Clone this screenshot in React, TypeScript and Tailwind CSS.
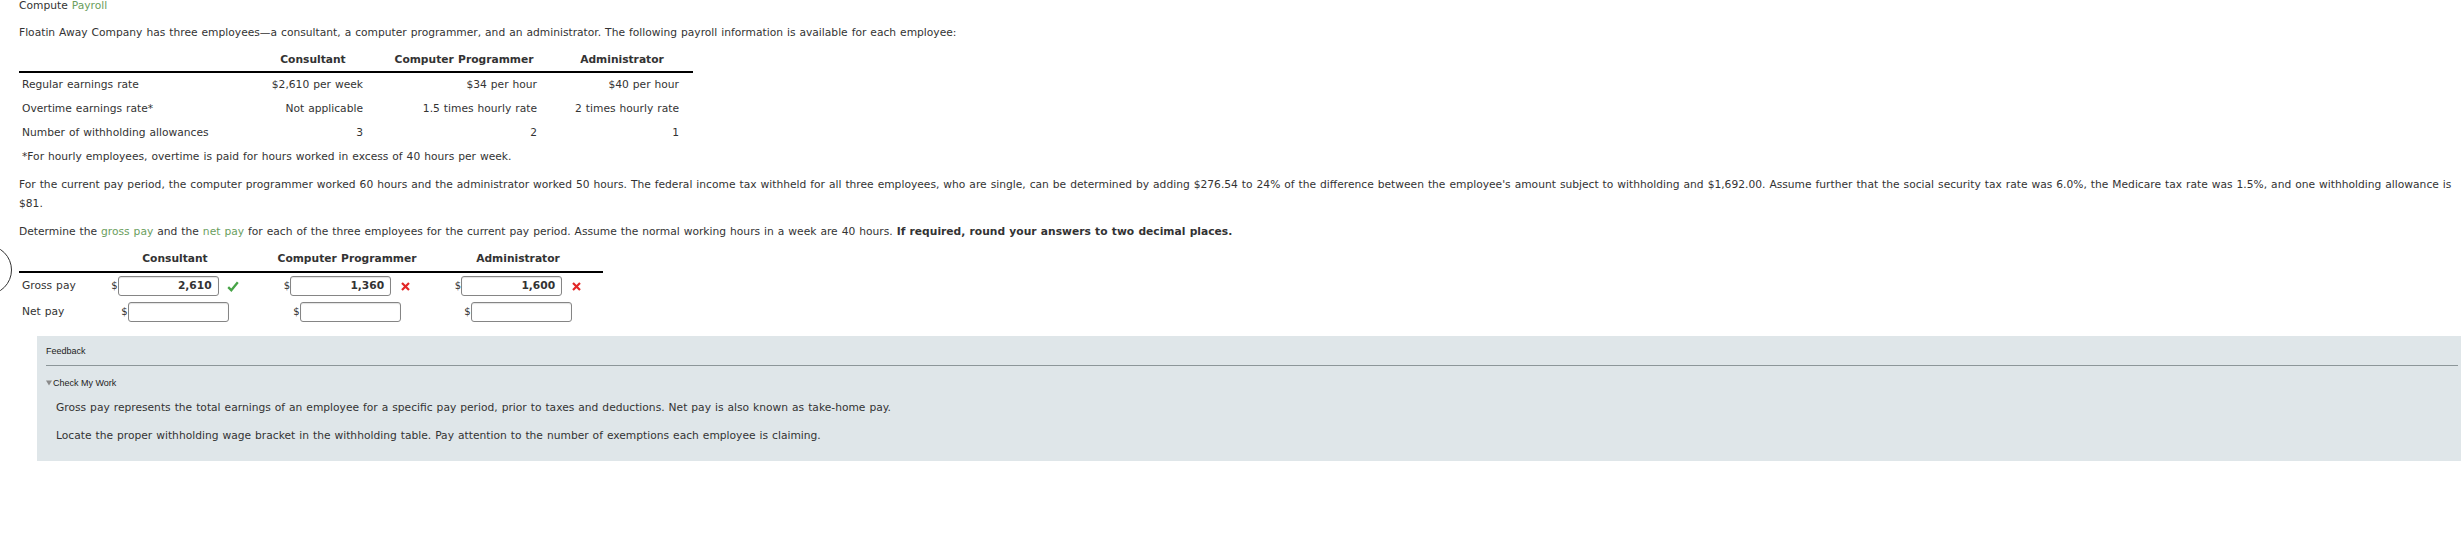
import React from "react";

const font = "font-['DejaVu_Sans',Verdana,sans-serif]";

const Check = () => (
  <svg width="12" height="11" viewBox="0 0 12 11" className="shrink-0">
    <path d="M1.2 6.2 L4.3 9.2 L10.8 1.2" fill="none" stroke="#47a447" strokeWidth="2.3" />
  </svg>
);

const Cross = () => (
  <svg width="9" height="9" viewBox="0 0 9 9" className="shrink-0">
    <path d="M1 1 L8 8 M8 1 L1 8" fill="none" stroke="#e32626" strokeWidth="2.2" />
  </svg>
);

interface AnswerProps {
  value?: string;
  mark?: "ok" | "bad";
}

const Answer = ({ value, mark }: AnswerProps) => (
  <div className="flex items-center justify-center h-full">
    <span className="text-[10px] leading-none">$</span>
    <div className="w-[101px] h-[20px] border border-[#858585] rounded-[3px] bg-white shadow-[inset_0_1px_1px_rgba(0,0,0,0.12)] flex items-center justify-end pr-[6px] font-bold text-[10.7px]">
      {value}
    </div>
    {mark === "ok" && (
      <span className="ml-[8px]">
        <Check />
      </span>
    )}
    {mark === "bad" && (
      <span className="ml-[10px]">
        <Cross />
      </span>
    )}
  </div>
);

const rates = [
  ["Regular earnings rate", "$2,610 per week", "$34 per hour", "$40 per hour"],
  ["Overtime earnings rate*", "Not applicable", "1.5 times hourly rate", "2 times hourly rate"],
  ["Number of withholding allowances", "3", "2", "1"],
];

export default function App() {
  return (
    <div className={`relative w-[2461px] h-[548px] overflow-hidden bg-white text-[#333] text-[10.7px] [word-spacing:0.58px] ${font}`}>
      <div className="absolute left-[-38px] top-[245px] w-[50px] h-[50px] rounded-full border-[1.5px] border-[#333]" />

      <div className="pl-[19px]">
        <div className="h-[11px] leading-[11px]">
          Compute <span className="text-[#6a9e5e]">Payroll</span>
        </div>
        <div className="mt-[15px] h-[14px] leading-[14px]">
          Floatin Away Company has three employees—a consultant, a computer programmer, and an administrator. The following payroll information is available for each employee:
        </div>

        <div className="mt-[10px] w-[674px]">
          <div className="grid grid-cols-[230px_128px_174px_142px] h-[23px] leading-[20px] border-b-2 border-black font-bold">
            <div />
            <div className="text-center">Consultant</div>
            <div className="text-center">Computer Programmer</div>
            <div className="text-center">Administrator</div>
          </div>
          {rates.map((r) => (
            <div key={r[0]} className="grid grid-cols-[230px_128px_174px_142px] h-[24px] leading-[24px]">
              <div className="pl-[3px]">{r[0]}</div>
              <div className="text-right pr-[14px]">{r[1]}</div>
              <div className="text-right pr-[14px]">{r[2]}</div>
              <div className="text-right pr-[14px]">{r[3]}</div>
            </div>
          ))}
          <div className="h-[24px] leading-[24px] pl-[3px] whitespace-nowrap">
            *For hourly employees, overtime is paid for hours worked in excess of 40 hours per week.
          </div>
        </div>

        <p className="mt-[6px] leading-[19px] pr-[2px]">
          For the current pay period, the computer programmer worked 60 hours and the administrator worked 50 hours. The federal income tax withheld for all three employees, who are single, can be determined by adding $276.54 to 24% of the difference between the employee's amount subject to withholding and $1,692.00. Assume further that the social security tax rate was 6.0%, the Medicare tax rate was 1.5%, and one withholding allowance is $81.
        </p>

        <p className="mt-[9px] leading-[19px]">
          Determine the <span className="text-[#6a9e5e]">gross pay</span> and the{" "}
          <span className="text-[#6a9e5e]">net pay</span> for each of the three employees for the current pay period. Assume the normal working hours in a week are 40 hours.{" "}
          <span className="font-bold">If required, round your answers to two decimal places.</span>
        </p>

        <div className="mt-[8px] w-[584px]">
          <div className="grid grid-cols-[70px_172px_172px_170px] h-[24px] leading-[20px] border-b-2 border-black font-bold">
            <div />
            <div className="text-center">Consultant</div>
            <div className="text-center">Computer Programmer</div>
            <div className="text-center">Administrator</div>
          </div>
          <div className="grid grid-cols-[70px_172px_172px_170px] h-[26px]">
            <div className="pl-[3px] leading-[26px]">Gross pay</div>
            <Answer value="2,610" mark="ok" />
            <Answer value="1,360" mark="bad" />
            <Answer value="1,600" mark="bad" />
          </div>
          <div className="grid grid-cols-[70px_172px_172px_170px] h-[26px]">
            <div className="pl-[3px] leading-[26px]">Net pay</div>
            <Answer />
            <Answer />
            <Answer />
          </div>
        </div>

        <div className="mt-[11px] ml-[18px] h-[125px] bg-[#dfe6e9] pl-[9px] pr-[3px] pt-[8px]">
          <div className="h-[14px] leading-[14px] text-[9px] [word-spacing:0px] font-['Liberation_Sans',Arial,sans-serif] text-[#222]">Feedback</div>
          <div className="mt-[7px] h-px bg-[#8c9699]" />
          <div className="mt-[10px] h-[14px] leading-[14px] text-[9px] [word-spacing:0px] font-['Liberation_Sans',Arial,sans-serif] text-[#222] flex items-center">
            <svg width="6" height="6" viewBox="0 0 6 6" className="mr-[1px]">
              <path d="M0 0.5 H6 L3 5.5 Z" fill="#8a8a8a" />
            </svg>
            Check My Work
          </div>
          <div className="mt-[11px] pl-[10px] h-[14px] leading-[14px]">
            Gross pay represents the total earnings of an employee for a specific pay period, prior to taxes and deductions. Net pay is also known as take-home pay.
          </div>
          <div className="mt-[14px] pl-[10px] h-[14px] leading-[14px]">
            Locate the proper withholding wage bracket in the withholding table. Pay attention to the number of exemptions each employee is claiming.
          </div>
        </div>
      </div>
    </div>
  );
}
